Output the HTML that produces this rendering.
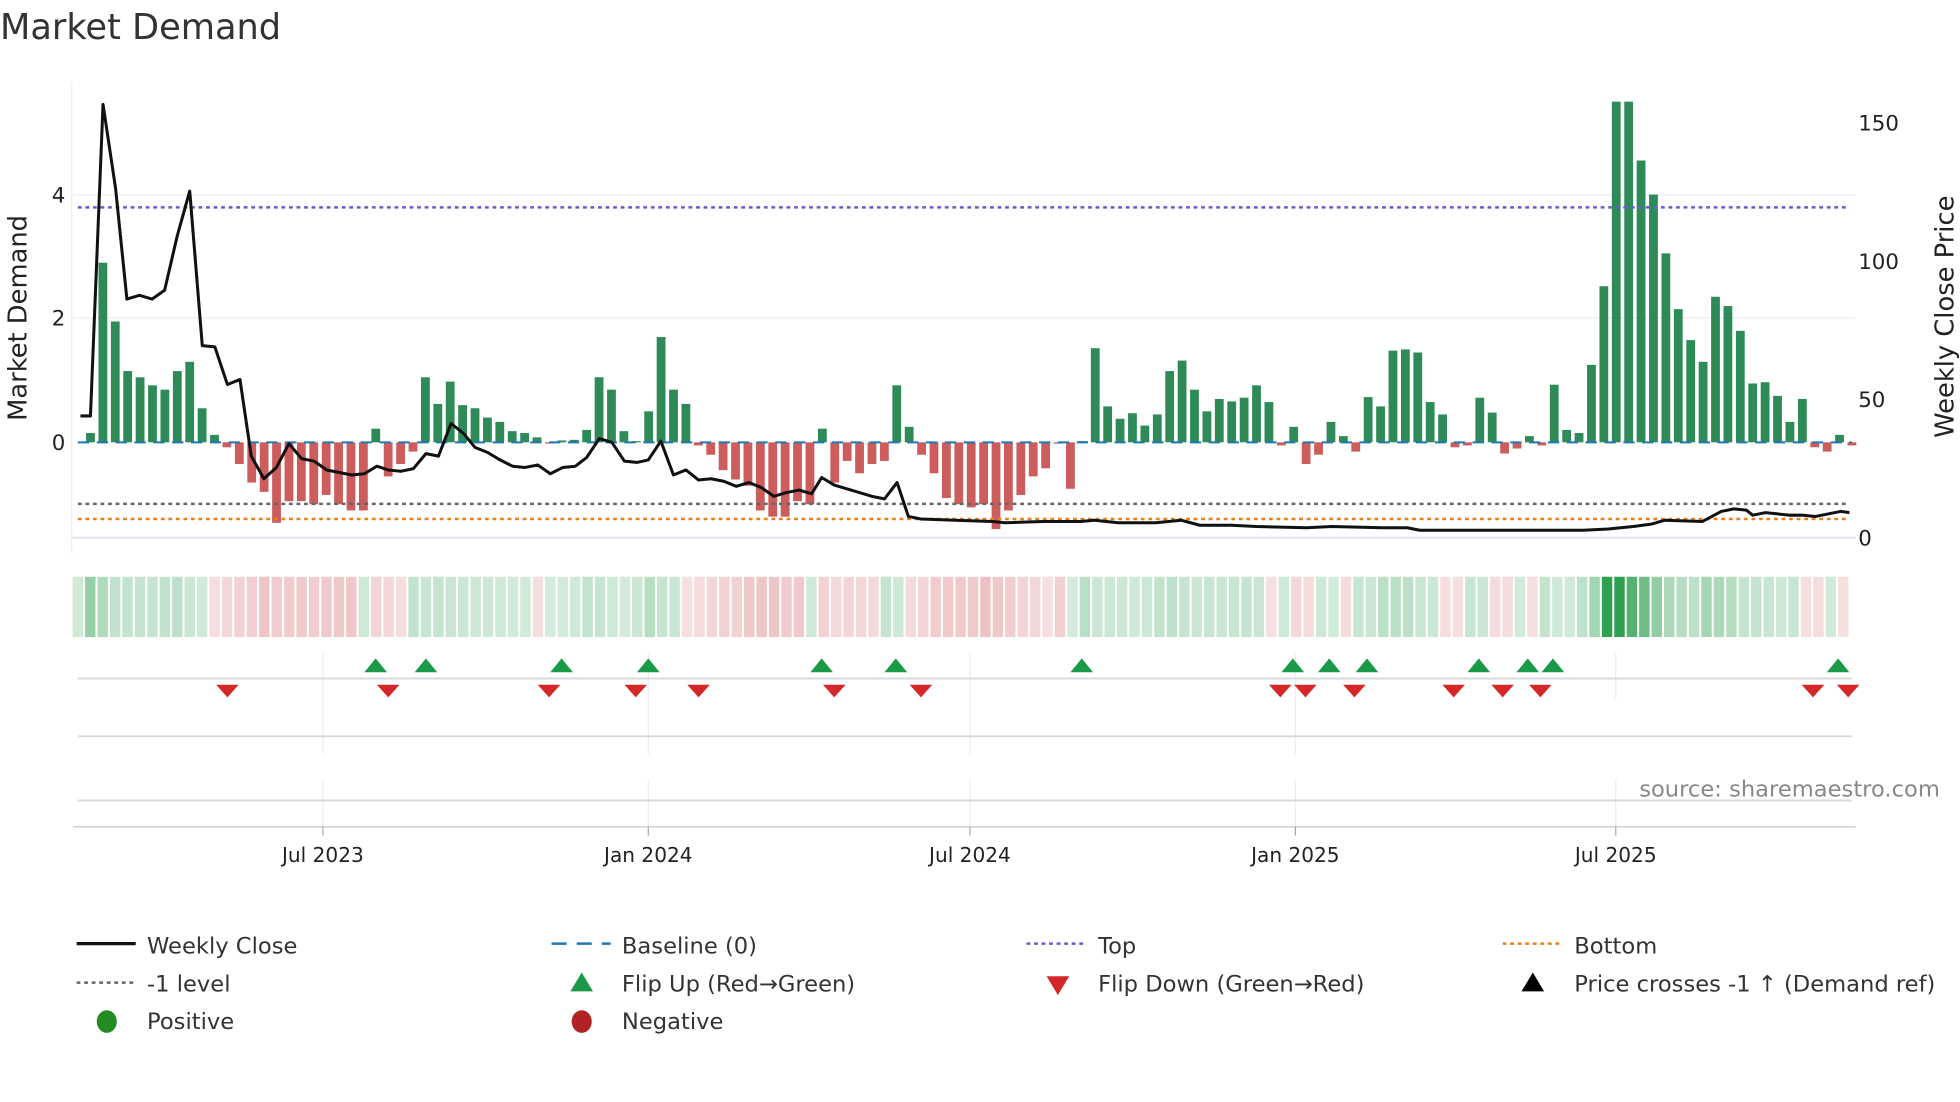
<!DOCTYPE html>
<html><head><meta charset="utf-8"><style>
html,body{margin:0;padding:0;background:#fff;}
svg{display:block;font-family:"DejaVu Sans","Liberation Sans",sans-serif;}
</style></head><body>
<svg id="s" width="1960" height="1102" viewBox="0 0 1560 877" xmlns="http://www.w3.org/2000/svg">
<rect width="1560" height="877" fill="#fff"/>
<text x="0" y="31" font-size="28" fill="#333">Market Demand</text>
<g stroke="#eef0f4" stroke-width="1.2">
<line x1="57" y1="155" x2="1477" y2="155"/><line x1="57" y1="253" x2="1477" y2="253"/>
<line x1="57" y1="428" x2="1477" y2="428" stroke="#e4e8f2" stroke-width="2"/>
<line x1="57" y1="65" x2="57" y2="440"/>
</g>
<g id="bars"></g>
<line x1="62" y1="352" x2="1474" y2="352" stroke="#1f77b4" stroke-width="1.6" stroke-dasharray="9,6"/>
<line x1="62" y1="165" x2="1470" y2="165" stroke="#6a5acd" stroke-width="2" stroke-dasharray="3,3"/>
<line x1="62" y1="401" x2="1470" y2="401" stroke="#666" stroke-width="2" stroke-dasharray="3,3"/>
<line x1="62" y1="413" x2="1470" y2="413" stroke="#e8801a" stroke-width="2" stroke-dasharray="3,3"/>
<polyline id="price" fill="none" stroke="#111" stroke-width="2.4" stroke-linejoin="round"/>
<g font-size="17" fill="#222">
<text x="52" y="161" text-anchor="end">4</text><text x="52" y="259" text-anchor="end">2</text><text x="52" y="358" text-anchor="end">0</text>
<text x="1479" y="104">150</text><text x="1479" y="214">100</text><text x="1479" y="324">50</text><text x="1479" y="434">0</text>
<text transform="translate(21,253) rotate(-90)" text-anchor="middle" font-size="20.5">Market Demand</text>
<text transform="translate(1555,252) rotate(-90)" text-anchor="middle" font-size="20.5">Weekly Close Price</text>
</g>
<g id="heat"></g>
<g stroke="#e9ecf2" stroke-width="1">
<line x1="257" y1="520" x2="257" y2="600"/><line x1="516" y1="520" x2="516" y2="600"/><line x1="772" y1="520" x2="772" y2="600"/><line x1="1031" y1="520" x2="1031" y2="600"/><line x1="1286" y1="520" x2="1286" y2="556"/>
<line x1="257" y1="620" x2="257" y2="658"/><line x1="516" y1="620" x2="516" y2="658"/><line x1="772" y1="620" x2="772" y2="658"/><line x1="1031" y1="620" x2="1031" y2="658"/><line x1="1286" y1="620" x2="1286" y2="658"/>
</g>
<g stroke="#d6d8dc" stroke-width="1.5">
<line x1="62" y1="540" x2="1474" y2="540"/><line x1="62" y1="586" x2="1474" y2="586"/><line x1="62" y1="637" x2="1474" y2="637"/><line x1="58" y1="658" x2="1477" y2="658"/>
</g>
<g id="flips"></g>
<text x="1544" y="634" font-size="18" fill="#888" text-anchor="end">source: sharemaestro.com</text>
<g stroke="#aaa"><line x1="257" y1="658" x2="257" y2="665"/><line x1="516" y1="658" x2="516" y2="665"/><line x1="772" y1="658" x2="772" y2="665"/><line x1="1031" y1="658" x2="1031" y2="665"/><line x1="1286" y1="658" x2="1286" y2="665"/></g>
<g font-size="16" fill="#222" text-anchor="middle">
<text x="257" y="686">Jul 2023</text><text x="516" y="686">Jan 2024</text><text x="772" y="686">Jul 2024</text><text x="1031" y="686">Jan 2025</text><text x="1286" y="686">Jul 2025</text>
</g>
<g font-size="18" fill="#333">
<line x1="61" y1="751" x2="108" y2="751" stroke="#111" stroke-width="2.5"/><text x="117" y="759">Weekly Close</text>
<line x1="439" y1="751" x2="486" y2="751" stroke="#1f77b4" stroke-width="2" stroke-dasharray="12,8"/><text x="495" y="759">Baseline (0)</text>
<line x1="817" y1="751" x2="864" y2="751" stroke="#6a5acd" stroke-width="2" stroke-dasharray="3,3"/><text x="874" y="759">Top</text>
<line x1="1196" y1="751" x2="1243" y2="751" stroke="#e8801a" stroke-width="2" stroke-dasharray="3,3"/><text x="1253" y="759">Bottom</text>
<line x1="61" y1="782" x2="108" y2="782" stroke="#666" stroke-width="2" stroke-dasharray="3,3"/><text x="117" y="789">-1 level</text>
<polygon points="454,789 472,789 463,774" fill="#1a9a48"/><text x="495" y="789">Flip Up (Red→Green)</text>
<polygon points="833,777 851,777 842,792" fill="#d62728"/><text x="874" y="789">Flip Down (Green→Red)</text>
<polygon points="1211,789 1229,789 1220,774" fill="#000"/><text x="1253" y="789">Price crosses -1 ↑ (Demand ref)</text>
<ellipse cx="85" cy="813" rx="8" ry="9" fill="#228b22"/><text x="117" y="819">Positive</text>
<ellipse cx="463" cy="813" rx="8" ry="9" fill="#b22222"/><text x="495" y="819">Negative</text>
</g>
</svg>
<script>
var v=[0.15,2.9,1.95,1.15,1.05,0.92,0.85,1.15,1.3,0.55,0.12,-0.08,-0.35,-0.65,-0.8,-1.3,-0.95,-0.95,-1.0,-0.85,-1.0,-1.1,-1.1,0.22,-0.55,-0.35,-0.15,1.05,0.62,0.98,0.6,0.55,0.4,0.33,0.18,0.15,0.08,-0.02,0.03,0.04,0.2,1.05,0.85,0.18,0.02,0.5,1.7,0.85,0.62,-0.05,-0.2,-0.45,-0.6,-0.7,-1.1,-1.2,-1.2,-0.95,-1.0,0.22,-0.65,-0.3,-0.5,-0.35,-0.3,0.92,0.25,-0.2,-0.5,-0.9,-1.0,-1.05,-1.0,-1.4,-1.1,-0.85,-0.55,-0.42,-0.02,-0.75,0.02,1.52,0.58,0.38,0.47,0.27,0.45,1.15,1.32,0.85,0.5,0.7,0.66,0.72,0.92,0.65,-0.05,0.25,-0.35,-0.2,0.33,0.1,-0.15,0.73,0.58,1.48,1.5,1.45,0.65,0.45,-0.08,-0.05,0.72,0.48,-0.18,-0.1,0.1,-0.05,0.93,0.2,0.15,1.25,2.52,5.5,5.5,4.55,4.0,3.05,2.15,1.65,1.3,2.35,2.2,1.8,0.95,0.97,0.75,0.33,0.7,-0.08,-0.15,0.12,-0.05];
var NS="http://www.w3.org/2000/svg",n=v.length,x0=72,dx=(1474-72)/(n-1);
function el(t,a,p){var e=document.createElementNS(NS,t);for(var k in a)e.setAttribute(k,a[k]);p.appendChild(e);return e;}
var B=document.getElementById('bars'),H=document.getElementById('heat');
var hw=(1477-57)/(n+0.5);
for(var i=0;i<n;i++){var x=x0+i*dx,h=Math.abs(v[i])*49.3,y=v[i]>=0?352-h:352;
el('rect',{x:x-3.5,y:y,width:7,height:Math.max(h,1),fill:v[i]>=0?'#2e8b57':'#cd5c5c'},B);
var a=Math.min(1,Math.abs(v[i])/5.5),c;
if(v[i]>=0){c='rgba(46,160,80,'+(0.2+0.7*a*a+0.15*Math.sqrt(a)).toFixed(3)+')';}
else{c='rgba(205,80,80,'+(0.18+0.12*Math.abs(v[i])).toFixed(3)+')';}
el('rect',{x:57+i*hw+0.8,y:459,width:hw-1.6,height:48,fill:c},H);}
var p="64,331 72,331 82,83 92,150 101,238 111,235 121,238 131,231 141,188 151,152 161,275 171,276 181,306 191,302 200,363 210,381 220,372 230,353 240,365 250,367 260,374 270,376 280,378 290,377 300,371 309,374 319,375 329,373 339,361 349,363 359,337 369,345 378,356 388,360 398,366 408,371 418,372 428,370 438,377 448,372 458,371 467,364 477,349 487,352 497,367 507,368 516,366 526,351 536,378 546,374 556,382 566,381 576,383 586,387 596,384 606,388 616,395 626,392 636,390 646,393 654,380 664,386 674,389 684,392 694,395 704,397 714,384 723,411 733,413 760,414 790,415 800,416 830,415 860,415 871,414 890,416 920,416 940,414 955,418 980,418 1000,419 1040,420 1060,419 1100,420 1120,420 1130,422 1180,422 1260,422 1280,421 1300,419 1315,417 1325,414 1355,415 1370,407 1380,405 1390,406 1395,410 1405,408 1415,409 1425,410 1435,410 1445,411 1455,409 1465,407 1472,408";
document.getElementById('price').setAttribute('points',p);
var F=document.getElementById('flips');
[299,339,447,516,654,713,861,1029,1058,1088,1177,1216,1236,1463].forEach(function(x){el('polygon',{points:(x-9)+',535 '+(x+9)+',535 '+x+',524',fill:'#1a9a48'},F);});
[181,309,437,506,556,664,733,1019,1039,1078,1157,1196,1226,1443,1471].forEach(function(x){el('polygon',{points:(x-9)+',545 '+(x+9)+',545 '+x+',555',fill:'#d62728'},F);});
</script>
</body></html>
